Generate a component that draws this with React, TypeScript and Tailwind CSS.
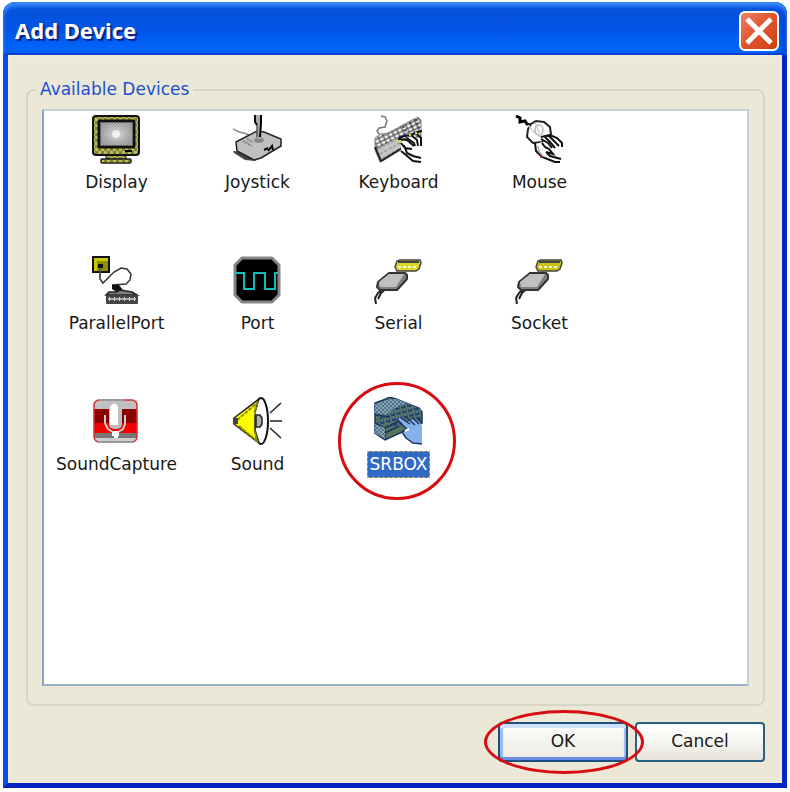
import { useState } from "react";
import type { ReactNode } from "react";

const DisplayIcon = () => (
  <>
    <defs>
      <pattern id="olive" width="6" height="6" patternUnits="userSpaceOnUse">
        <rect width="6" height="6" fill="#85841a" />
        <path d="M0 0h3v3H0zM3 3h3v3H3z" fill="#b9b878" />
      </pattern>
      <pattern id="dither" width="3" height="3" patternUnits="userSpaceOnUse">
        <path d="M0 0h1.5v1.5H0zM1.500 1.500H3V3H1.500z" fill="#808080" opacity=".55" />
      </pattern>
      <radialGradient id="screen">
        <stop offset="0" stopColor="#fff" />
        <stop offset=".35" stopColor="#d8d8d8" />
        <stop offset="1" stopColor="#a8a8a8" />
      </radialGradient>
    </defs>
    <path d="M14 39h20v5H14z" fill="url(#olive)" stroke="#111" />
    <rect x="9" y="44" width="30" height="4" rx="1" fill="url(#olive)" stroke="#222" strokeWidth="1.500" />
    <rect x="1" y="1" width="46" height="39" rx="3" fill="url(#olive)" stroke="#111" strokeWidth="2" />
    <rect x="7" y="6" width="35" height="26" rx="1" fill="url(#screen)" stroke="#111" strokeWidth="3" />
    <rect x="8" y="7" width="33" height="24" fill="url(#dither)" />
    <circle cx="24" cy="19" r="4" fill="#fff" opacity=".7" />
    <path d="M33 36h7" stroke="#000" strokeWidth="2" />
  </>
);

const JoystickIcon = () => (
  <>
    <path d="M0 36l9 1 10 7 5 2-12-1L1 38z" fill="#444" />
    <path d="M0 14l6 3 5 1 5 2" fill="none" stroke="#888" strokeWidth="1.500" />
    <path d="M3 27l21-11 7 1 17 7v7L28 43l-7 2-17-9z" fill="#c0c0c0" stroke="#222" strokeWidth="1.500" />
    <path d="M10 26l9 5M14 24l6 3" stroke="#808080" strokeWidth="2" strokeDasharray="2 1" />
    <ellipse cx="26" cy="25" rx="5" ry="3" fill="#888" />
    <path d="M31 35l4-2M35 36l4-5 1 4" fill="none" stroke="#000" strokeWidth="2" />
    <path d="M22 0h7v8l-1 3v13h-4V11l-2-3z" fill="#aaa" />
    <path d="M22 0v7l2 3M28 0v8l-1 14" fill="none" stroke="#000" strokeWidth="2" />
    <path d="M24 10v12" stroke="#555" strokeWidth="1.500" />
  </>
);

const KeyboardIcon = () => (
  <>
    <defs>
      <pattern id="keys" width="5" height="4" patternUnits="userSpaceOnUse" patternTransform="rotate(-26)">
        <rect width="5" height="4" fill="#8c8c8c" />
        <rect width="3" height="2" fill="#f4f4f4" />
        <path d="M3 2h2v1H3z" fill="#444" />
      </pattern>
    </defs>
    <path d="M7 1l4 1 2 4-2 6-6 1-2 3 3 4" fill="none" stroke="#777" strokeWidth="1.500" />
    <path d="M1 23l6-4 7-1 24-13 6-3 3 3v18L10 45 6 47 1 35z" fill="url(#keys)" stroke="#888" />
    <path d="M2 35l5 12 25-16-9-8z" fill="#c4c4c4" />
    <path d="M4 34l21-11M6 39l22-12M9 43l20-11" stroke="#999" strokeWidth="1.500" strokeDasharray="3 2" />
    <path d="M1 32l6 14 21-13" fill="none" stroke="#222" strokeWidth="2" />
    <path d="M27 27l8-5 13 1v8l-12 1 3 7 9 4v4l-13-1-8-7z" fill="#fff" />
    <path d="M25 23l5-2 7-1 6-3 5-1M33 23l7 5 1 3M38 21l5 4 1 6M43 19l4 4v8" fill="none" stroke="#111" strokeWidth="2" />
    <path d="M24 24l9 1 7 6M27 28l4 5 7 1M30 30l3 8 6 3 8 2" fill="none" stroke="#111" strokeWidth="2" />
    <path d="M27 36l5 4 7 6 8 1" fill="none" stroke="#111" strokeWidth="2" />
    <path d="M24 26h3M35 20h2M41 18h2" stroke="#dddd22" strokeWidth="2" />
    <path d="M36 7l3 8M42 4l3 10M29 11l3 6" stroke="#444" strokeWidth="2" strokeDasharray="2 2" />
  </>
);

const MouseIcon = () => (
  <>
    <path d="M1 1l4 2v4l5-1 2 3 3 1" fill="none" stroke="#000" strokeWidth="3" />
    <path d="M16 9l5-3 8 1 6 5 1 7-9 8-9 1-6-6 1-8z" fill="#fff" stroke="#222" strokeWidth="2" />
    <path d="M13 10l7 8 9 7M20 8l4 10" fill="none" stroke="#d0d0d0" strokeWidth="1.500" />
    <ellipse cx="24" cy="15" rx="4" ry="5" fill="none" stroke="#bbb" strokeWidth="1.500" />
    <path d="M27 23l8-2 5 2 7 5 1 3-5-1-1 3-4-2-3 1-6-4z" fill="#fff" />
    <path d="M26 22l9-2 7 3 5 5v4M30 22l5 5 5 6M34 21l5 5 5 5M26 24l7 4 4 5" fill="none" stroke="#111" strokeWidth="2" />
    <path d="M21 29l6-2 4 5 7 6-6-1-4-2 5 6 13 4v3l-12-2-9-6-5-6z" fill="#fff" />
    <path d="M20 28l1 8 6 6 8 3 5 2h5M27 28l3 4 4 2 4 5-7-2M31 37l4 4 11 3" fill="none" stroke="#111" strokeWidth="2" />
    <path d="M23 31l1 6 4 4" fill="none" stroke="#aaa" strokeWidth="1.500" />
    <path d="M25 42h2" stroke="#b33" strokeWidth="2" />
  </>
);

const ParallelPortIcon = () => (
  <>
    <path d="M8 10v13l3 4 4-4 7-7 7-4 6 1 4 5-1 6-4 4-14 1" fill="none" stroke="#333" strokeWidth="1.500" />
    <rect x="1" y="1" width="16" height="15" fill="#8f8e00" stroke="#111" strokeWidth="2" />
    <path d="M2 2h14v3H5v10H2z" fill="#c9c700" />
    <rect x="6" y="8" width="5" height="4" fill="#111" />
    <path d="M8 12v10" stroke="#555" strokeWidth="1.500" />
    <path d="M20 29h7l4 5-5 3-6-4z" fill="#111" />
    <path d="M17 36h8l3-2 12 2 5 3H14z" fill="#808080" stroke="#222" strokeWidth="1.500" />
    <rect x="14" y="39" width="32" height="9" rx="1" fill="#444" />
    <path d="M17 43h27" stroke="#ddd" strokeWidth="4" strokeDasharray="1 4" />
    <path d="M16 43h28" stroke="#ccc" strokeWidth="1.500" />
  </>
);

const PortIcon = () => (
  <>
    <path d="M9 2h30l7 7v30l-7 7H9l-7-7V9z" fill="#000" stroke="#858585" strokeWidth="3" strokeLinejoin="round" />
    <path d="M3 17h8v16h10V17h11v16h10V17h3" fill="none" stroke="#10bcbc" strokeWidth="2" />
  </>
);

const Plug = ({ metal }: { metal: string }) => (
  <>
    <path d="M10 31l-6 6-3 5 1 6M13 32l-6 5-3 6" fill="none" stroke="#222" strokeWidth="2" />
    <path d="M23 5l3-1h20l1 3-2 6-3 2H23l-2-4z" fill={metal} stroke="#444" strokeWidth="1.500" />
    <path d="M24 11h19" stroke="#fff" strokeWidth="2" strokeDasharray="3 2" opacity=".8" />
    <path d="M24 6h21" stroke="#444" strokeWidth="2" />
    <path d="M15 17h16l2 2v4L23 34H6l-3-3 1-5z" fill="#808080" stroke="#333" strokeWidth="2" strokeLinejoin="round" />
    <path d="M15 18h15l-8 13H6l-1-5z" fill="#c0c0c0" />
  </>
);

const SerialIcon = () => <Plug metal="#d9d72b" />;

const SocketIcon = () => <Plug metal="#c6c41c" />;

const SoundCaptureIcon = () => (
  <>
    <defs>
      <clipPath id="tile">
        <rect x="2" y="3" width="43" height="42" rx="5" />
      </clipPath>
    </defs>
    <g clipPath="url(#tile)">
      <path d="M2 3h43v10H2z" fill="#c0c0c0" />
      <path d="M2 12h43v14H2z" fill="#8b0000" />
      <path d="M2 26h43v10H2z" fill="#f40000" />
      <path d="M2 36h43v5H2z" fill="#777" />
      <path d="M2 41h43v4H2z" fill="#ccc" />
    </g>
    <rect x="2" y="3" width="43" height="42" rx="5" fill="none" stroke="#d83030" strokeWidth="1.500" />
    <path d="M7 3h25M6 45h35" stroke="#999" strokeWidth="2" />
    <path d="M13 18v8l3 6 5 3h5l5-3 2-5v-9" fill="none" stroke="#ccc" strokeWidth="2" />
    <rect x="17" y="6" width="13" height="26" rx="5" fill="#bdbdbd" />
    <path d="M18 10q5-7 8 0v18h-8z" fill="#fff" />
    <path d="M24 34v7M20 37h7" stroke="#fff" strokeWidth="4" />
  </>
);

const SoundIcon = () => (
  <>
    <ellipse cx="28" cy="24" rx="7" ry="23" fill="#fff" stroke="#111" strokeWidth="2" />
    <path d="M1 21L26 2l-4 13v18l4 13L1 27z" fill="#ffff00" stroke="#222" strokeWidth="1.500" />
    <path d="M4 23L24 6l-2 8v4M6 29l18 15-3-12" fill="none" stroke="#8d8c10" strokeWidth="2" strokeDasharray="4 1" />
    <path d="M0 21h5v6H0z" fill="#444" />
    <path d="M23 18h4l2 3v6l-2 3h-4z" fill="#b0b0b0" stroke="#222" strokeWidth="1.500" />
    <path d="M37 16L48 6M37 24h12M37 31l11 10" stroke="#222" strokeWidth="1.500" />
  </>
);

const SrboxIcon = () => (
  <>
    <defs>
      <pattern id="mesh" width="4" height="4" patternUnits="userSpaceOnUse">
        <rect width="4" height="4" fill="#86a4b0" />
        <path d="M0 0h2v2H0zM2 2h2v2H2z" fill="#4f7590" />
      </pattern>
      <pattern id="buttons" width="6" height="5" patternUnits="userSpaceOnUse" patternTransform="rotate(-14)">
        <rect width="6" height="5" fill="#557566" />
        <path d="M0 0h4v3H0z" fill="#1c3c72" />
        <path d="M1 0h2v1H1z" fill="#6689b8" />
      </pattern>
    </defs>
    <path d="M1 6l11-4 3-2 7 2 23 9 3 4v11L11 43 1 36z" fill="#55755e" stroke="#1c3464" strokeWidth="1.500" />
    <path d="M1 7l12-4 9-1 11 4-12 5-7 7-13-2z" fill="url(#mesh)" />
    <path d="M13 18l8-7 13-5 13 7v9L21 31 2 26l1-4z" fill="url(#buttons)" />
    <path d="M1 18l15 2M1 26l10 5 14-7M11 36l14-7M11 31v11" fill="none" stroke="#1c3464" strokeWidth="1.500" />
    <path d="M1 27l10 4v11L1 36z" fill="url(#mesh)" />
    <path d="M23 22l3-1 7 4 4-2 5-1 6 6v19l-9-1-7-5-4-6 5-3-4-5z" fill="#86b0ea" />
    <path d="M23 22l5 6 5 4-5 3 4 6 7 5 9 1M27 21l9 6M33 21l8 7M38 20l7 7M43 20l5 6" fill="none" stroke="#1c3464" strokeWidth="1.500" />
    <path d="M31 34l4-2" stroke="#fff" strokeWidth="2" />
  </>
);

interface Device {
  name: string;
  icon: ReactNode;
  ringed?: boolean;
}

const devices: Device[] = [
  { name: "Display", icon: <DisplayIcon /> },
  { name: "Joystick", icon: <JoystickIcon /> },
  { name: "Keyboard", icon: <KeyboardIcon /> },
  { name: "Mouse", icon: <MouseIcon /> },
  { name: "ParallelPort", icon: <ParallelPortIcon /> },
  { name: "Port", icon: <PortIcon /> },
  { name: "Serial", icon: <SerialIcon /> },
  { name: "Socket", icon: <SocketIcon /> },
  { name: "SoundCapture", icon: <SoundCaptureIcon /> },
  { name: "Sound", icon: <SoundIcon /> },
  { name: "SRBOX", icon: <SrboxIcon />, ringed: true },
];

const App = () => {
  const [selected, setSelected] = useState("SRBOX");

  return (
    <div className="flex min-h-screen bg-white px-[3px] pt-[2px] pb-1 font-['DejaVu_Sans',sans-serif] text-[17px] text-[#181818]">
      <div className="flex flex-1 flex-col rounded-t-xl border-x-[5px] border-b-[5px] border-t-0 border-l-[#0850e8] border-r-[#0528c4] border-b-[#0423bd] bg-[#0850e8]">
        <header className="-mx-[5px] flex h-[53px] items-center justify-between rounded-t-xl bg-linear-to-b from-[#0a4fd8] via-[#0054e6] to-[#0468ff] px-3 pr-2 shadow-[inset_0_4px_4px_#3c92ff,inset_-4px_0_4px_#0638cc,inset_0_-2px_1px_#0048d8]">
          <h1 className="pt-1 font-['Noto_Sans',sans-serif] text-[22px] font-bold text-white [text-shadow:2px_2px_1px_#0a1f80]">
            Add Device
          </h1>
          <button
            type="button"
            aria-label="Close"
            className="mt-1 flex h-10 w-10 items-center justify-center rounded-md border-2 border-white bg-linear-to-br from-[#ec8064] via-[#e0532c] to-[#d0400c]"
          >
            <svg viewBox="0 0 36 36" className="h-9 w-9">
              <path d="M6 6l24 24M30 6L6 30" stroke="#fff" strokeWidth="5" />
            </svg>
          </button>
        </header>

        <main className="flex flex-1 flex-col bg-[#ebe8d8] pt-[21px] pr-[17px] pb-[21px] pl-[18px] shadow-[inset_0_0_2px_#fff6d8]">
          <fieldset className="flex flex-1 flex-col rounded-lg border-2 border-[#d6d6c4] px-[14px] pt-[6px] pb-[18px]">
            <legend className="-ml-[6px] px-1 leading-[27px] text-[#1c50d0]">
              Available Devices
            </legend>
            <ul className="grid flex-1 auto-rows-[141px] grid-cols-[repeat(auto-fill,141px)] border-2 border-t-[#c4d2d8] border-r-[#c4d2d8] border-b-[#9ab0c4] border-l-[#8ba6c0] bg-white pt-1 pl-[2px]">
              {devices.map((device) => (
                <li key={device.name} className="relative">
                  <button
                    type="button"
                    aria-pressed={selected === device.name}
                    onClick={() => setSelected(device.name)}
                    className="flex w-full flex-col items-center gap-[5px]"
                  >
                    <svg viewBox="0 0 49 49" className="h-[49px] w-[49px]">
                      {device.icon}
                    </svg>
                    <span
                      className={
                        selected === device.name
                          ? "border border-dashed border-[#d8a860] bg-[#316ac5] px-[2px] leading-[25px] text-white"
                          : "border border-transparent px-[2px] leading-[25px]"
                      }
                    >
                      {device.name}
                    </span>
                  </button>
                  {device.ringed && (
                    <span className="pointer-events-none absolute -top-[15px] left-[10px] h-[118px] w-[118px] rounded-full border-[3px] border-[#d80c10]" />
                  )}
                </li>
              ))}
            </ul>
          </fieldset>

          <div className="mt-4 flex justify-end gap-[7px]">
            <div className="relative">
              <button
                type="submit"
                className="h-10 w-[130px] rounded border-2 border-[#1c5080] bg-linear-to-b from-[#fcfcfa] to-[#ecebe4] shadow-[inset_0_4px_0_#cfe0fa,inset_0_-3px_0_#6a8ee0,inset_3px_0_1px_#98b8ee,inset_-2px_0_1px_#98b8ee]"
              >
                OK
              </button>
              <span className="pointer-events-none absolute -top-3 -left-[14px] h-16 w-[160px] rounded-[50%] border-[3px] border-[#d80c10]" />
            </div>
            <button
              type="button"
              className="h-10 w-[130px] rounded border-2 border-[#2a5f86] bg-linear-to-b from-white via-[#f6f5f0] to-[#e6e3da]"
            >
              Cancel
            </button>
          </div>
        </main>
      </div>
    </div>
  );
};

export default App;
